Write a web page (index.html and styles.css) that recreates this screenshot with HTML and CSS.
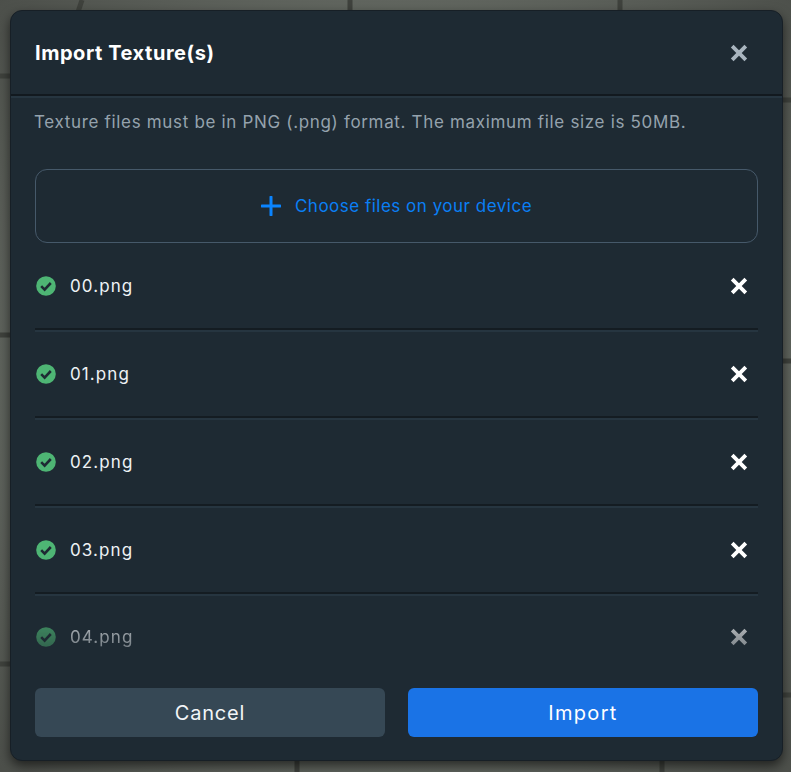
FILE: index.html
```html
<!DOCTYPE html>
<html lang="en">
<head>
<meta charset="utf-8">
<title>Import Texture(s)</title>
<link rel="stylesheet" href="styles.css">
</head>
<body>
<svg class="backdrop" width="791" height="772" viewBox="0 0 791 772" aria-hidden="true">
  <g class="backdrop-lines">
    <path d="M82 0L78 12"/><path d="M350 0V12"/><path d="M620 0V12"/>
    <path d="M0 76H12"/><path d="M0 335H12"/><path d="M0 664H12"/>
    <path d="M781 100H791"/><path d="M781 361H791"/><path d="M781 695H791"/>
    <path d="M297 759V772"/><path d="M662 759V772"/>
  </g>
</svg>
<main class="modal">
  <header class="modal-header">
    <h1 class="title">Import Texture(s)</h1>
    <button class="icon-btn muted" aria-label="Close">
      <svg width="18" height="18" viewBox="0 0 18 18"><path d="M2.2 2.2L15.8 15.8M15.8 2.2L2.2 15.8"/></svg>
    </button>
  </header>
  <div class="modal-body">
    <p class="hint">Texture files must be in PNG (.png) format. The maximum file size is 50MB.</p>
    <div class="dropzone">
      <svg class="plus" width="20" height="20" viewBox="0 0 20 20"><path d="M10 1V19M1 10H19"/></svg>
      <span>Choose files on your device</span>
    </div>
    <ul class="files">
      <li class="file"><svg class="ok" width="20" height="20" viewBox="0 0 20 20"><circle cx="10" cy="10" r="9.8"/><path d="M5.2 10.2L8.6 13.6L14.8 7"/></svg><span class="name">00.png</span><button class="icon-btn" aria-label="Remove"><svg width="18" height="18" viewBox="0 0 18 18"><path d="M2.2 2.2L15.8 15.8M15.8 2.2L2.2 15.8"/></svg></button></li>
      <li class="file"><svg class="ok" width="20" height="20" viewBox="0 0 20 20"><circle cx="10" cy="10" r="9.8"/><path d="M5.2 10.2L8.6 13.6L14.8 7"/></svg><span class="name">01.png</span><button class="icon-btn" aria-label="Remove"><svg width="18" height="18" viewBox="0 0 18 18"><path d="M2.2 2.2L15.8 15.8M15.8 2.2L2.2 15.8"/></svg></button></li>
      <li class="file"><svg class="ok" width="20" height="20" viewBox="0 0 20 20"><circle cx="10" cy="10" r="9.8"/><path d="M5.2 10.2L8.6 13.6L14.8 7"/></svg><span class="name">02.png</span><button class="icon-btn" aria-label="Remove"><svg width="18" height="18" viewBox="0 0 18 18"><path d="M2.2 2.2L15.8 15.8M15.8 2.2L2.2 15.8"/></svg></button></li>
      <li class="file"><svg class="ok" width="20" height="20" viewBox="0 0 20 20"><circle cx="10" cy="10" r="9.8"/><path d="M5.2 10.2L8.6 13.6L14.8 7"/></svg><span class="name">03.png</span><button class="icon-btn" aria-label="Remove"><svg width="18" height="18" viewBox="0 0 18 18"><path d="M2.2 2.2L15.8 15.8M15.8 2.2L2.2 15.8"/></svg></button></li>
      <li class="file faded"><svg class="ok" width="20" height="20" viewBox="0 0 20 20"><circle cx="10" cy="10" r="9.8"/><path d="M5.2 10.2L8.6 13.6L14.8 7"/></svg><span class="name">04.png</span><button class="icon-btn" aria-label="Remove"><svg width="18" height="18" viewBox="0 0 18 18"><path d="M2.2 2.2L15.8 15.8M15.8 2.2L2.2 15.8"/></svg></button></li>
    </ul>
  </div>
  <footer class="modal-footer">
    <button class="btn secondary">Cancel</button>
    <button class="btn primary">Import</button>
  </footer>
</main>
</body>
</html>
```
FILE: styles.css
```css
* { box-sizing: border-box; }
html, body { margin: 0; height: 100%; }
body {
  width: 791px;
  height: 772px;
  overflow: hidden;
  padding: 10px 8px 11px 10px;
  background: radial-gradient(ellipse 560px 560px at 400px 386px, #666b64 60%, #4c4f4a 100%);
  font-family: Inter, "Liberation Sans", sans-serif;
  position: relative;
}
.backdrop { position: absolute; left: 0; top: 0; }
.backdrop-lines { stroke: #3f423d; stroke-width: 5; fill: none; filter: blur(.7px); }
.modal {
  position: relative;
  display: flex;
  flex-direction: column;
  width: 773px;
  height: 751px;
  background: #1e2a33;
  border-radius: 12px;
  box-shadow: 0 5px 12px rgba(0, 0, 0, .6);
  border: 1px solid #171f26;
}
.modal-header {
  display: flex;
  align-items: center;
  justify-content: space-between;
  height: 85px;
  padding: 0 24px;
  border-bottom: 2px solid #12191f;
  box-shadow: 0 2px 0 #263540;
}
.title { margin: 0; font-size: 20px; font-weight: 700; letter-spacing: .55px; color: #fff; }
.icon-btn {
  display: flex;
  padding: 0;
  margin-right: 10px;
  background: none;
  border: 0;
}
.icon-btn svg path { stroke: #fff; stroke-width: 3.8; fill: none; }
.icon-btn.muted svg path { stroke: #a9b5bf; }
.modal-body { flex: 1; padding: 0 24px; display: flex; flex-direction: column; min-height: 0; }
.hint {
  margin: 15px 0 0 -1px;
  height: 22px;
  line-height: 22px;
  font-size: 17px;
  letter-spacing: .67px;
  color: #95a2ad;
  white-space: nowrap;
}
.dropzone {
  display: flex;
  align-items: center;
  justify-content: center;
  gap: 14px;
  margin-top: 36px;
  height: 74px;
  border: 1px solid #46596a;
  border-radius: 12px;
  color: #0a7ff5;
  font-size: 17px;
  letter-spacing: .5px;
}
.plus path { stroke: #0a84ff; stroke-width: 3; fill: none; stroke-linecap: round; }
.files { list-style: none; margin: -1px 0 0; padding: 0; }
.file {
  display: flex;
  align-items: center;
  height: 88px;
  padding-top: 2px;
  border-bottom: 2px solid #141c22;
  box-shadow: 0 2px 0 #263540;
  color: #eef2f5;
  font-size: 17px;
  letter-spacing: 1.1px;
}
.file:last-child { height: 84px; border: 0; box-shadow: none; }
.file .name { flex: 1; margin-left: 14px; }
.ok { margin-left: 1px; }
.ok circle { fill: #4eb574; }
.ok path { stroke: #1e2a33; stroke-width: 2.6; fill: none; }
.faded { -webkit-mask-image: linear-gradient(to bottom, #000, rgba(0, 0, 0, .1)); mask-image: linear-gradient(to bottom, #000, rgba(0, 0, 0, .1)); }
.modal-footer {
  display: flex;
  gap: 23px;
  padding: 0 24px 23px;
}
.btn {
  flex: 1;
  height: 49px;
  border: 0;
  border-radius: 6px;
  color: #f2f5f7;
  font: 400 20px Inter, "Liberation Sans", sans-serif;
  letter-spacing: .8px;
}
.secondary { background: #364855; }
.primary { background: #1a73e6; color: #fff; letter-spacing: 1.3px; }
```
